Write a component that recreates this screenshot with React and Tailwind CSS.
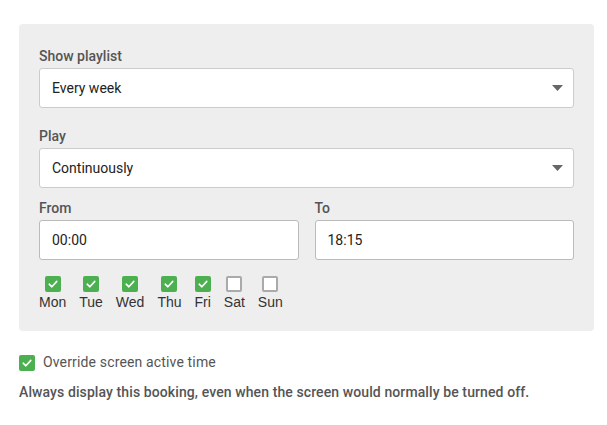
import React from 'react';

const days = [
  { label: 'Mon', checked: true },
  { label: 'Tue', checked: true },
  { label: 'Wed', checked: true },
  { label: 'Thu', checked: true },
  { label: 'Fri', checked: true },
  { label: 'Sat', checked: false },
  { label: 'Sun', checked: false },
];

const Check = ({ checked }) =>
  checked ? (
    <div className="w-4 h-4 rounded-[2px] bg-[#4caf50] flex items-center justify-center">
      <svg width="12" height="12" viewBox="0 0 12 12" fill="none">
        <path d="M2.2 6.2 L4.9 8.8 L9.8 3.4" stroke="#fff" strokeWidth="1.6" strokeLinecap="round" strokeLinejoin="round" />
      </svg>
    </div>
  ) : (
    <div className="w-4 h-4 rounded-[2px] bg-white border-2 border-[#aaaaaa]" />
  );

const Select = ({ value }) => (
  <div className="h-10 bg-white border border-[#cccccc] rounded-[3px] flex items-center justify-between pl-3 pr-[10px]">
    <span className="text-[14px] text-[#222]">{value}</span>
    <svg width="11" height="6" viewBox="0 0 11 6">
      <path d="M0 0 H11 L5.5 6 Z" fill="#666" />
    </svg>
  </div>
);

const Field = ({ value }) => (
  <div className="h-10 bg-white border border-[#bbbbbb] rounded-[3px] flex items-center pl-3">
    <span className="text-[14px] text-[#222]">{value}</span>
  </div>
);

const Label = ({ children }) => (
  <div className="text-[14px] leading-4 font-medium text-[#555] mb-1">{children}</div>
);

export default function App() {
  return (
    <div className="w-[607px] h-[425px] bg-white pt-6 px-[19px] font-['Roboto',sans-serif]">
      <div className="w-[575px] bg-[#eeeeee] rounded-[4px] px-5 pt-6 pb-[21px]">
        <Label>Show playlist</Label>
        <Select value="Every week" />
        <div className="mt-5">
          <Label>Play</Label>
          <Select value="Continuously" />
        </div>
        <div className="mt-3 flex gap-4">
          <div className="flex-1">
            <Label>From</Label>
            <Field value="00:00" />
          </div>
          <div className="flex-1">
            <Label>To</Label>
            <Field value="18:15" />
          </div>
        </div>
        <div className="mt-4 flex gap-[13px]">
          {days.map((d) => (
            <div key={d.label} className="flex flex-col items-center">
              <Check checked={d.checked} />
              <span className="mt-[2px] text-[14px] leading-4 text-[#333] font-['Liberation_Sans',sans-serif]">
                {d.label}
              </span>
            </div>
          ))}
        </div>
      </div>
      <div className="mt-[21px] flex items-center gap-2">
        <Check checked />
        <span className="text-[14px] tracking-[0.15px] text-[#555]">Override screen active time</span>
      </div>
      <p className="mt-[11px] text-[14px] leading-4 tracking-[0.1px] font-medium text-[#555]">
        Always display this booking, even when the screen would normally be turned off.
      </p>
    </div>
  );
}
